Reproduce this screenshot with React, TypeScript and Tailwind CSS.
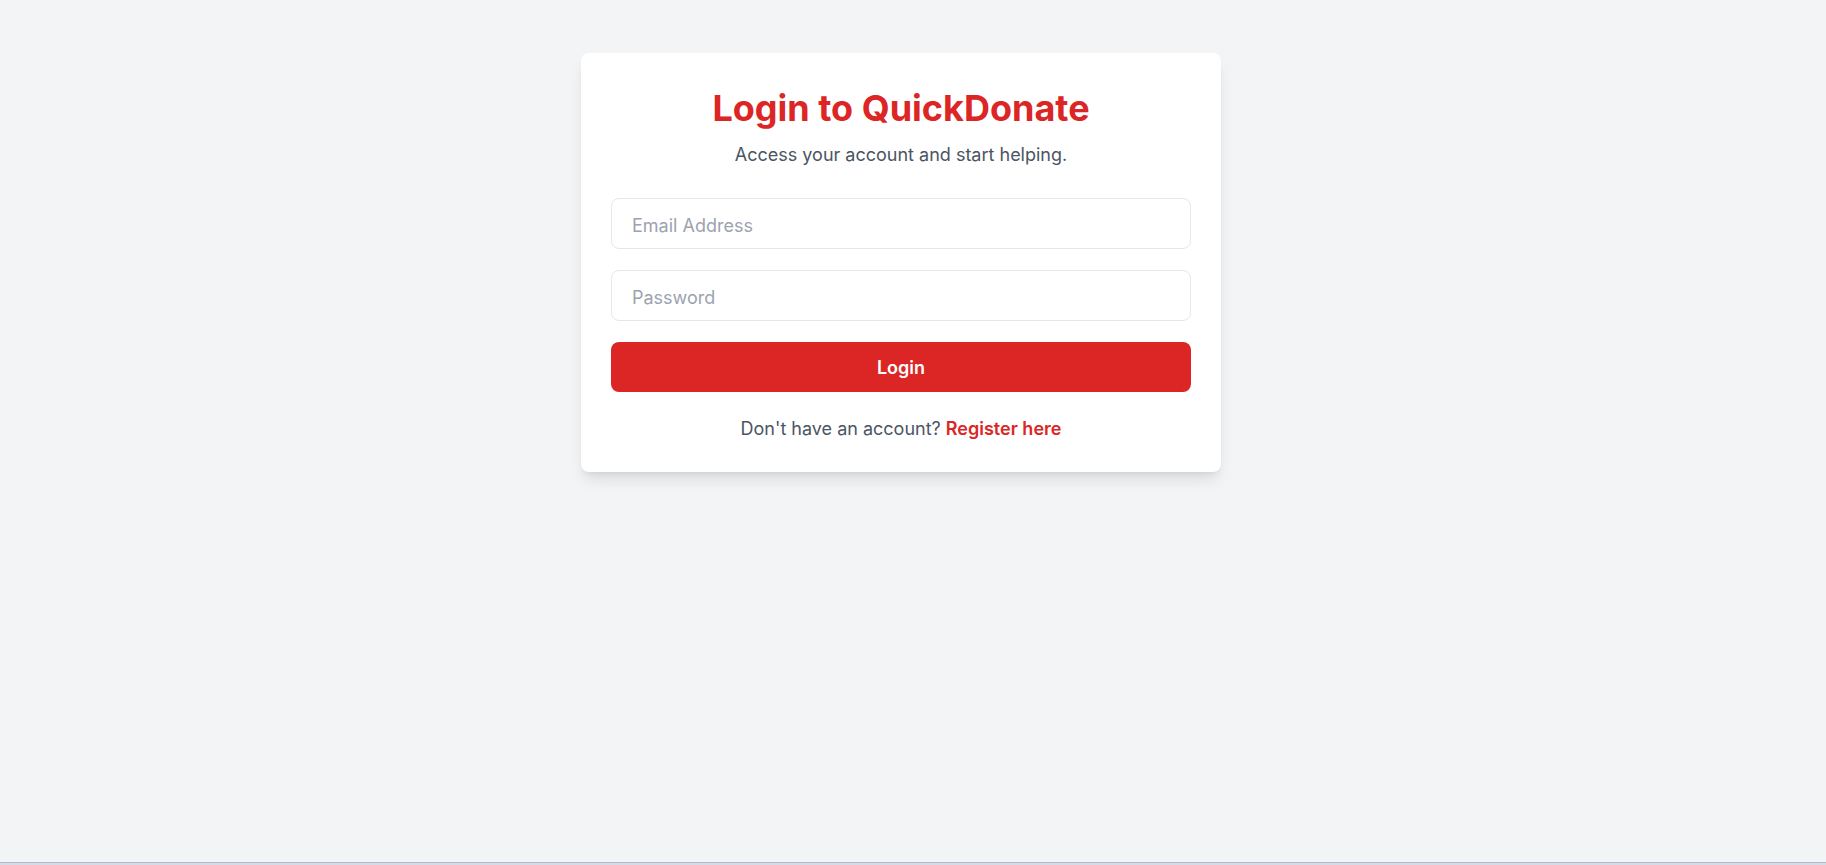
const Login = () => (
  <div className="min-h-screen flex flex-col bg-[#f3f4f6] font-['Inter',_sans-serif]">
    <main className="flex-1 flex justify-center items-start pt-[53px] pr-6">
      {/* Card */}
      <div className="w-[640px] bg-white rounded-lg shadow-lg pt-[35px] px-[30px] pb-[29px]">
        <h1 className="text-4xl leading-10 font-bold text-[#dc2626] text-center">
          Login to QuickDonate
        </h1>
        <p className="mt-[13px] text-lg leading-7 text-[#4b5563] text-center">
          Access your account and start helping.
        </p>

        <form className="mt-[29px] flex flex-col gap-[21px]">
          <input
            type="email"
            placeholder="Email Address"
            className="w-full h-[51px] px-5 pt-[3px] text-lg border border-[#e5e7eb] rounded-lg text-[#1f2937] placeholder-[#9ca3af] outline-none"
          />
          <input
            type="password"
            placeholder="Password"
            className="w-full h-[51px] px-5 pt-[3px] text-lg border border-[#e5e7eb] rounded-lg text-[#1f2937] placeholder-[#9ca3af] outline-none"
          />
          <button
            type="button"
            className="w-full h-[50px] pt-[2px] bg-[#dc2626] text-white text-lg font-semibold rounded-lg"
          >
            Login
          </button>
        </form>

        <p className="mt-[23px] text-lg leading-7 text-[#4b5563] text-center">
          Don't have an account?{" "}
          <a href="#" className="font-semibold text-[#dc2626]">
            Register here
          </a>
        </p>
      </div>
    </main>

    {/* bottom edge */}
    <div className="h-px bg-[#b7bbc1]" />
    <div className="h-[2px] bg-[#d4dce8]" />
  </div>
);

export default function App() {
  return <Login />;
}
